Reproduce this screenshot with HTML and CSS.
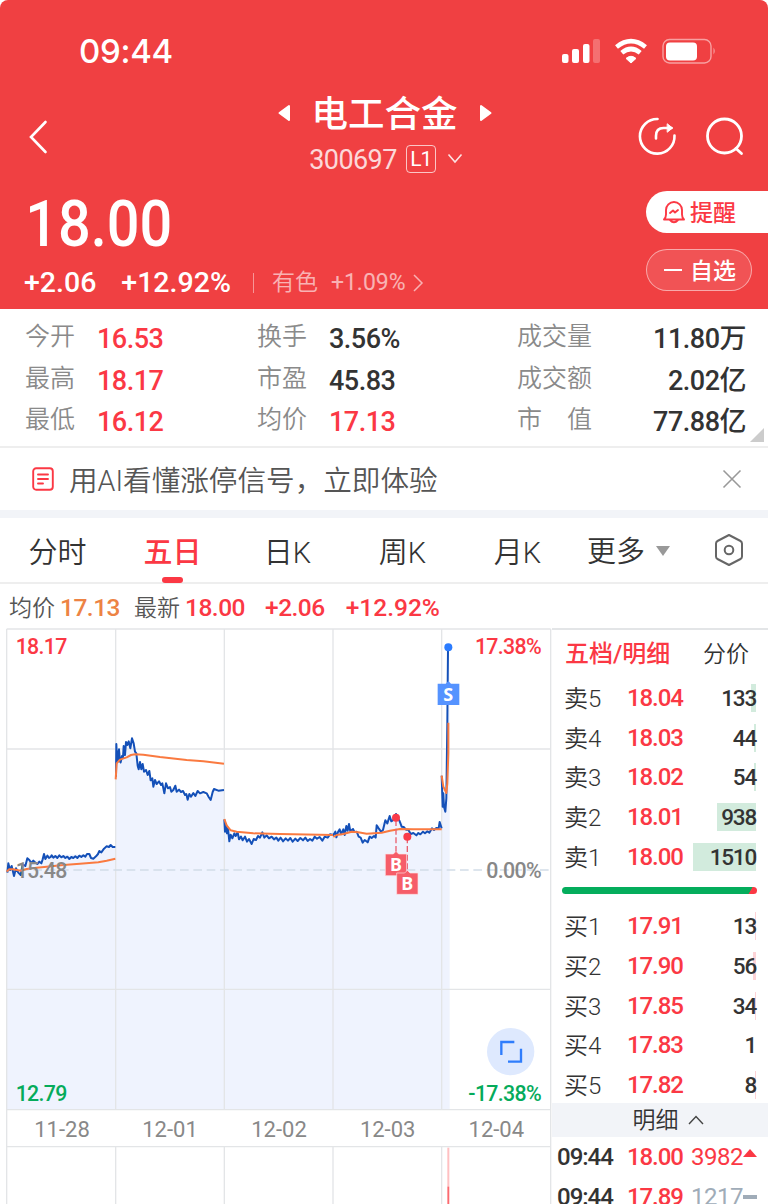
FILE: index.html
```html
<!DOCTYPE html>
<html lang="zh-CN">
<head>
  <meta charset="UTF-8">
  <meta name="viewport" content="width=device-width, initial-scale=1.0">
  <title>电工合金 300697</title>
  <link rel="stylesheet" href="styles.css">
</head>
<body>

  <header class="header">
    <!-- Status bar -->
    <div class="status-bar">
      <span class="clock">09:44</span>
      <svg class="status-icons" width="156" height="28" viewBox="0 0 156 28" fill="#fff">
        <rect x="2" y="17" width="6.5" height="9" rx="2"/>
        <rect x="12" y="12" width="7" height="14" rx="2"/>
        <rect x="23" y="7" width="6.5" height="19" rx="2"/>
        <rect x="33" y="2" width="7" height="24" rx="2" opacity=".25"/>
        <path d="M71 26l-5-4.600q5-4.200 10 0z" stroke="#fff" stroke-width="1" stroke-linejoin="round"/>
        <g fill="none" stroke="#fff" stroke-width="4.600">
          <path d="M56.500 10q14.500-11.600 29 0"/>
          <path d="M61.800 15.800q9.200-7.600 18.400 0"/>
        </g>
        <rect x="103" y="2.500" width="48" height="23.500" rx="6.500" fill="none" stroke="#fff" stroke-width="1.400" opacity=".5"/>
        <rect x="106" y="5.500" width="31" height="18" rx="4"/>
        <path d="M153.500 10.500q2.500 3.500 0 7z" opacity=".5"/>
      </svg>
    </div>

    <!-- Stock name -->
    <div class="nav">
      <svg class="back" width="24" height="36" viewBox="0 0 24 36"><path d="M18.500 3L4 18l14.500 15" fill="none" stroke="#fff" stroke-width="2.600" stroke-linecap="round"/></svg>
      <div class="stock">
        <div class="stock-name">
          <svg width="13" height="18" viewBox="0 0 13 18"><path d="M1.500 9L11 2v14z" fill="#fff" stroke="#fff" stroke-width="2" stroke-linejoin="round"/></svg>
          <h1>电工合金</h1>
          <svg width="13" height="18" viewBox="0 0 13 18"><path d="M11.500 9L2 2v14z" fill="#fff" stroke="#fff" stroke-width="2" stroke-linejoin="round"/></svg>
        </div>
        <div class="stock-code">
          <span class="code">300697</span>
          <span class="level">L1</span>
          <svg width="16" height="11" viewBox="0 0 16 11"><path d="M1.500 1.500L8 9l6.500-7.500" fill="none" stroke="#fff" stroke-width="1.600" opacity=".85"/></svg>
        </div>
      </div>
      <div class="nav-icons">
        <svg width="40" height="40" viewBox="0 0 40 40" fill="none" stroke="#fff" stroke-width="2.600" stroke-linecap="round" stroke-linejoin="round">
          <path d="M19.500 3A17.300 17.300 0 1 0 36.500 19.500"/>
          <path d="M18 22.500V20q0-8 7.500-8h8"/>
          <path d="M29.500 8l5 4-5 4z" fill="#fff" stroke-width="1"/>
        </svg>
        <svg width="40" height="40" viewBox="0 0 40 40" fill="none" stroke="#fff" stroke-width="2.800" stroke-linecap="round">
          <circle cx="19.500" cy="20" r="17"/>
          <path d="M31 32.500l5.500 5"/>
        </svg>
      </div>
    </div>

    <!-- Price -->
    <div class="quote">
      <div>
        <div class="price">18.00</div>
        <div class="change">
          <span class="delta">+2.06</span>
          <span class="percent">+12.92%</span>
          <i class="sep"></i>
          <span class="sector">有色</span>
          <span class="sector-num">+1.09%</span>
          <svg width="12" height="20" viewBox="0 0 12 20"><path d="M2 2l8 8-8 8" fill="none" stroke="#fff" stroke-width="1.500" opacity=".6"/></svg>
        </div>
      </div>
      <div class="actions">
        <div class="pill pill-alert">
          <svg width="24" height="24" viewBox="0 0 24 24" fill="none" stroke="#fb3844" stroke-width="1.900" stroke-linecap="round" stroke-linejoin="round">
            <path d="M2 19.500q2-2 2-5V10a8 8 0 0 1 16 0v4.500q0 3 2 5zM8 20q4 4.500 8 0"/>
            <path d="M8 13l3-2.500 2 2L16 10"/>
          </svg>
          <span>提醒</span>
        </div>
        <div class="pill pill-watch"><i class="minus"></i><span>自选</span></div>
      </div>
    </div>
  </header>

  <!-- Key figures -->
  <section class="stats">
    <dl>
      <dt>今开</dt><dd class="up">16.53</dd>
      <dt>最高</dt><dd class="up">18.17</dd>
      <dt>最低</dt><dd class="up">16.12</dd>
    </dl>
    <dl>
      <dt>换手</dt><dd>3.56%</dd>
      <dt>市盈</dt><dd>45.83</dd>
      <dt>均价</dt><dd class="up">17.13</dd>
    </dl>
    <dl class="wide">
      <dt>成交量</dt><dd>11.80万</dd>
      <dt>成交额</dt><dd>2.02亿</dd>
      <dt>市　值</dt><dd>77.88亿</dd>
    </dl>
    <i class="corner"></i>
  </section>

  <!-- AI notice -->
  <section class="notice">
    <svg width="22" height="24" viewBox="0 0 22 24" fill="none" stroke="#fb3844" stroke-width="1.900" stroke-linecap="round">
      <rect x="1.200" y="1.200" width="19.600" height="21.600" rx="3"/>
      <path d="M6 7.500h10M6 12h10M6 16.500h5"/>
    </svg>
    <p>用AI看懂涨停信号，立即体验</p>
    <svg width="20" height="20" viewBox="0 0 20 20" stroke="#999" stroke-width="1.600"><path d="M1.500 1.500l17 17M18.500 1.500l-17 17"/></svg>
  </section>

  <!-- Period tabs -->
  <nav class="tabs">
    <a>分时</a>
    <a class="active">五日</a>
    <a>日K</a>
    <a>周K</a>
    <a>月K</a>
    <a class="more">更多<i class="caret"></i></a>
    <svg width="32" height="34" viewBox="0 0 32 34" fill="none" stroke="#666" stroke-width="2" stroke-linejoin="round">
      <path d="M16 2l11.500 6q1.500.8 1.500 2.500v13q0 1.700-1.500 2.500L16 32 4.500 26Q3 25.200 3 23.500v-13Q3 8.800 4.500 8z"/>
      <circle cx="16" cy="17" r="4.300"/>
    </svg>
  </nav>

  <div class="summary">
    <span class="label">均价</span><span class="avg">17.13</span>
    <span class="label latest">最新</span><span>18.00</span>
    <span class="s-delta">+2.06</span><span class="s-percent">+12.92%</span>
  </div>

  <main class="main">
    <!-- Five day chart -->
    <svg class="chart" width="552" height="576" viewBox="0 24 1656 1728">
      <g class="area">
        <path d="M20 755L25 735 30 750 42 758 62 760 82 718 127 722 132 705 268 703 278 716 320 680 346 682V1469H20z"/>
        <path d="M347 470L349 375 362 425 378 370 396 357 413 435 453 480 493 515 526 500 563 538 593 514 632 540 642 508 673 510V1469H347z"/>
        <path d="M673 598L688 660 707 637 755 665 787 642 850 655 900 662 960 657 999 645 1045 615 1090 668 1130 620 1165 595 1200 600 1225 635 1250 645 1325 620V1469H673z"/>
        <path d="M1325 467L1330 560 1336 575 1344 310 1349 90V1469H1325z"/>
      </g>
      <g class="grid">
        <path d="M20 27H1652M20 387H1652M20 1108H1652M20 1469H1652M20 1580H1652"/>
        <path d="M20 27V1752M347 27V1469M673 27V1469M999 27V1469M1325 27V1469M1652 27V1752M347 1580V1752M673 1580V1752M999 1580V1752M1325 1580V1752"/>
      </g>
      <path class="zero" d="M20 750H1652"/>

      <g class="line">
        <polyline points="22,758 25,730 30,750 35,738 42,768 48,745 55,758 62,765 68,733 76,738 82,715 88,720 94,729 100,722 106,728 112,732 118,725 124,730 128,718 132,702 136,717 142,707 147,714 152,711 155,706 160,713 166,708 172,714 178,706 184,712 190,708 196,714 202,710 208,717 214,711 220,714 226,709 232,714 238,707 244,711 250,706 256,710 261,702 268,702 273,714 280,716 288,709 294,702 298,693 304,697 312,686 320,679 327,681 332,675 338,681 346,681"/>
        <polyline points="348,470 349,372 351,416 353,425 355,398 357,388 360,424 362,427 366,408 369,412 371,378 375,405 378,366 382,375 386,364 391,385 396,355 401,370 405,395 409,400 413,437 416,448 420,426 424,448 428,432 432,455 438,450 443,465 448,453 452,481 457,475 460,500 465,480 470,492 477,484 483,495 487,490 493,520 498,490 504,505 510,501 514,515 520,510 526,497 530,515 537,509 543,516 549,513 555,525 559,522 563,539 568,522 573,530 580,519 586,528 593,513 600,520 610,516 620,520 626,531 632,540 638,516 642,507 655,512 672,510"/>
        <polyline points="673,598 675,635 678,612 681,640 684,625 688,664 692,644 697,655 703,640 707,648 713,637 717,658 723,650 728,661 735,650 741,665 747,657 755,672 761,657 768,660 774,648 780,653 787,637 793,653 800,646 807,655 815,650 822,658 829,653 835,662 842,653 849,664 857,655 864,662 871,654 878,665 886,656 893,663 901,654 909,661 916,653 923,663 930,657 937,662 944,650 951,656 959,651 967,662 974,650 983,653 990,643 1000,645 1006,635 1009,652 1014,636 1019,628 1023,643 1030,628 1034,645 1039,618 1043,632 1047,612 1051,634 1059,627 1063,636 1070,635 1076,650 1082,653 1088,668 1094,660 1103,667 1109,650 1115,654 1122,648 1127,653 1130,616 1136,625 1143,635 1149,630 1156,601 1162,610 1169,588 1174,604 1180,600 1188,582 1193,593 1199,604 1205,620 1211,621 1218,629 1225,629 1232,642 1240,639 1249,646 1255,639 1261,643 1269,635 1275,640 1282,634 1288,638 1296,625 1302,630 1309,624 1316,625 1319,606 1325,625"/>
        <polyline points="1325,467 1328,560 1330,520 1332,560 1336,575 1339,535 1342,310 1344,88"/>
      </g>
      <g class="avg-line">
        <path d="M20 755L27 748 40 748 62 752 80 747 110 743 140 740 190 735 240 731 295 727 320 722 346 716"/>
        <path d="M347 478L350 430 360 419 380 412 393 405 405 403 430 404 480 411 560 420 610 424 672 431"/>
        <path d="M673 597L680 616 692 631 710 635 760 640 840 642 999 645"/>
        <path d="M1000 651L1010 645 1030 642 1055 635 1075 637 1100 641 1145 638 1170 632 1200 627 1240 628 1325 628"/>
        <path d="M1325 467L1330 500 1339 519 1342 490 1345 400 1345 308"/>
      </g>

      <!-- Trades -->
      <g class="buy">
        <path class="stem" d="M1188 600V700M1222 652V765"/>
        <circle cx="1188" cy="593" r="12"/>
        <circle cx="1222" cy="650" r="12"/>
        <path class="tag" d="M1156 702H1180L1188 694 1196 702H1220V767H1156z"/>
        <path class="tag" d="M1190 759H1214L1222 751 1230 759H1254V823H1190z"/>
        <text x="1188" y="753">B</text>
        <text x="1222" y="810">B</text>
      </g>
      <g class="sell">
        <circle cx="1345" cy="82" r="12"/>
        <path class="tag" d="M1313 191H1337L1345 183 1353 191H1378V255H1313z"/>
        <text x="1345" y="242">S</text>
      </g>

      <g class="axis">
        <text class="red" x="47" y="103">18.17</text>
        <text class="red end" x="1623" y="103">17.38%</text>
        <text x="47" y="773">15.48</text>
        <text class="end" x="1623" y="773">0.00%</text>
        <text class="green" x="47" y="1444">12.79</text>
        <text class="green end" x="1623" y="1444">-17.38%</text>
      </g>
      <g class="dates">
        <text x="186" y="1551">11-28</text>
        <text x="510" y="1551">12-01</text>
        <text x="837" y="1551">12-02</text>
        <text x="1163" y="1551">12-03</text>
        <text x="1489" y="1551">12-04</text>
      </g>

      <!-- Full screen button -->
      <circle cx="1532" cy="1295" r="71" fill="#dee9fe"/>
      <path d="M1504 1305V1266H1543M1563 1286V1325H1524" fill="none" stroke="#2f7dfc" stroke-width="7"/>

      <path d="M1345 1583V1752" stroke="#ffc0c2" stroke-width="6"/>
      <path d="M1345 1700V1752" stroke="#fb6a70" stroke-width="5"/>
    </svg>

    <!-- Order book -->
    <aside class="book">
      <div class="book-tabs"><b>五档/明细</b><span>分价</span></div>
      <ul class="asks">
        <li><span>卖5</span><b>18.04</b><em style="--w: 5px">133</em></li>
        <li><span>卖4</span><b>18.03</b><em style="--w: 2px">44</em></li>
        <li><span>卖3</span><b>18.02</b><em style="--w: 2px">54</em></li>
        <li><span>卖2</span><b>18.01</b><em style="--w: 39px">938</em></li>
        <li><span>卖1</span><b>18.00</b><em style="--w: 63px">1510</em></li>
      </ul>
      <div class="ratio"></div>
      <ul class="bids">
        <li><span>买1</span><b>17.91</b><em style="--w: 1px">13</em></li>
        <li><span>买2</span><b>17.90</b><em style="--w: 3px">56</em></li>
        <li><span>买3</span><b>17.85</b><em style="--w: 1px">34</em></li>
        <li><span>买4</span><b>17.83</b><em style="--w: 0px">1</em></li>
        <li><span>买5</span><b>17.82</b><em style="--w: 1px">8</em></li>
      </ul>
      <div class="ticks-title">
        <span>明细</span>
        <svg width="16" height="10" viewBox="0 0 16 10"><path d="M1 9l7-7.500L15 9" fill="none" stroke="#444" stroke-width="1.400"/></svg>
      </div>
      <ul class="ticks">
        <li><span>09:44</span><b>18.00</b><em class="up">3982</em><i class="arrow"></i></li>
        <li><span>09:44</span><b>17.89</b><em>1217</em><i class="flat"></i></li>
      </ul>
    </aside>
  </main>

</body>
</html>
```
FILE: styles.css
```css
* {
  margin: 0;
  padding: 0;
  box-sizing: border-box;
}

body {
  width: 768px;
  height: 1204px;
  overflow: hidden;
  background: #fff;
  color: #333;
  font-family: Roboto, "Noto Sans CJK SC", sans-serif;
}

i, em {
  font-style: normal;
}

ul {
  list-style: none;
}

svg {
  display: block;
  flex: none;
}

.up {
  color: #fb3844;
}

/* Header */
.header {
  height: 309px;
  background: #f04042;
  color: #fff;
  border-radius: 8px 8px 0 0;
}

.status-bar {
  height: 92px;
  padding: 10px 52px 0 79px;
  display: flex;
  align-items: center;
  justify-content: space-between;
}

.clock {
  font: 500 33px/40px Inter, sans-serif;
  letter-spacing: -0.300px;
}

.nav {
  height: 88px;
  padding: 0 23px 0 27px;
  display: flex;
  justify-content: space-between;
}

.back {
  margin-top: 27px;
}

.stock {
  margin-left: 80px;
}

.stock-name {
  height: 42px;
  display: flex;
  align-items: center;
  justify-content: center;
  gap: 21px;
}

.stock-name h1 {
  font-size: 36.500px;
  line-height: 42px;
  font-weight: 500;
  padding-top: 3px;
}

.stock-code {
  height: 48px;
  display: flex;
  align-items: center;
  justify-content: center;
  padding: 1px 0 0 3px;
}

.code {
  font-size: 27px;
  letter-spacing: -0.600px;
  opacity: .8;
  padding-top: 2px;
}

.level {
  width: 30px;
  height: 28px;
  margin: 0 11px 0 9px;
  border: 1px solid rgba(255, 255, 255, .7);
  border-radius: 4px;
  font-size: 21px;
  line-height: 27px;
  text-align: center;
  letter-spacing: -1px;
}

.nav-icons {
  display: flex;
  gap: 27px;
  padding-top: 24px;
}

.quote {
  display: flex;
  justify-content: space-between;
}

.price {
  height: 86px;
  padding: 2px 0 0 28px;
  font-size: 64px;
  line-height: 86px;
  font-weight: 500;
  transform: scaleX(.9);
  transform-origin: 0 0;
}

.change {
  height: 30px;
  padding: 3px 0 0 24px;
  display: flex;
  align-items: center;
  font-size: 28.500px;
  line-height: 30px;
  font-weight: 500;
}

.percent {
  margin-left: 25px;
}

.sep {
  width: 1px;
  height: 20px;
  margin: 0 18px 0 22px;
  background: rgba(255, 255, 255, .45);
}

.sector, .sector-num {
  font-size: 23px;
  font-weight: 400;
  opacity: .6;
}

.sector {
  font-weight: 350;
}

.sector-num {
  margin: 0 6px 0 13px;
}

.actions {
  width: 122px;
  padding-top: 11px;
}

.pill {
  height: 42px;
  display: flex;
  align-items: center;
  font-size: 23px;
  font-weight: 500;
}

.pill span {
  margin-top: -3px;
}

.pill-alert {
  padding-left: 16px;
  gap: 4px;
  background: #fff;
  color: #fb3844;
  border-radius: 21px 0 0 21px;
}

.pill-watch {
  width: 106px;
  margin-top: 16px;
  padding-left: 17px;
  gap: 8px;
  border: 1px solid rgba(255, 255, 255, .5);
  border-radius: 21px;
  background: rgba(255, 255, 255, .1);
}

.minus {
  width: 18px;
  height: 2px;
  background: #fff;
}

/* Key figures */
.stats {
  position: relative;
  height: 139px;
  padding: 7px 22px 0 25px;
  display: flex;
  border-bottom: 2px solid #eee;
}

.stats dl {
  width: 232px;
  display: grid;
  grid-template-columns: 72px 1fr;
  grid-auto-rows: 41.500px;
  line-height: 41px;
}

.stats dl + dl {
  width: 260px;
}

.stats .wide {
  width: 229px;
  grid-template-columns: 90px 1fr;
  text-align: right;
}

.stats dt {
  color: #8a8a8a;
  font-size: 25px;
  font-weight: 350;
  text-align: left;
}

.stats dd {
  font-size: 27px;
  font-weight: 500;
  letter-spacing: -0.500px;
  padding-top: 3px;
}

.corner {
  position: absolute;
  right: 4px;
  bottom: 4px;
  border: 7.500px solid #ccc;
  border-top-color: transparent;
  border-left-color: transparent;
}

/* Notice */
.notice {
  height: 70px;
  padding: 0 26px 0 32px;
  display: flex;
  align-items: center;
  border-bottom: 8px solid #f2f4f8;
}

.notice p {
  flex: 1;
  margin-left: 15px;
  padding-top: 4px;
  font-size: 28.600px;
  line-height: 40px;
  font-weight: 350;
  color: #555;
}

/* Tabs */
.tabs {
  height: 66px;
  padding: 0 23px 0 0;
  display: flex;
  align-items: center;
  border-bottom: 2px solid #eee;
}

.tabs a {
  position: relative;
  width: 115px;
  height: 64px;
  padding-top: 3px;
  font-size: 29px;
  font-weight: 350;
  line-height: 64px;
  text-align: center;
}

.tabs .active {
  color: #fb3844;
  font-weight: 500;
}

.tabs .active::after {
  content: "";
  position: absolute;
  left: 47px;
  bottom: -1px;
  width: 21px;
  height: 6px;
  border-radius: 3px;
  background: #fb3844;
}

.tabs .more {
  width: auto;
  margin: 0 auto 0 12px;
  display: flex;
  align-items: center;
}

.caret {
  margin: -1px 0 0 11px;
  border: 7px solid transparent;
  border-top: 10px solid #999;
  border-bottom: 0;
}

.summary {
  height: 44px;
  padding: 3px 0 0 9px;
  display: flex;
  align-items: center;
  color: #fb3844;
  font-size: 24.500px;
  font-weight: 500;
  letter-spacing: -0.500px;
}

.summary .label {
  width: 51px;
  margin-top: -4px;
  color: #555;
  font-size: 23px;
  font-weight: 350;
  letter-spacing: 0;
}

.summary .avg {
  color: #ed8344;
}

.summary .latest {
  margin-left: 14px;
}

.s-delta {
  margin-left: 20px;
}

.s-percent {
  margin-left: 21px;
  letter-spacing: 0;
}

/* Chart */
.main {
  display: flex;
}

.grid path {
  fill: none;
  stroke: #e3e5e7;
  stroke-width: 4;
}

.area {
  fill: #eff3fe;
}

.zero {
  stroke: #d2dde8;
  stroke-width: 4;
  stroke-dasharray: 26 14;
}

.line {
  fill: none;
  stroke: #1450b8;
  stroke-width: 6;
  stroke-linejoin: round;
}

.avg-line {
  fill: none;
  stroke: #fa7a40;
  stroke-width: 6;
  stroke-linejoin: round;
}

.buy {
  fill: #f93a49;
}

.sell {
  fill: #2b7cff;
}

.stem {
  stroke: #e9606f;
  stroke-width: 4;
  stroke-dasharray: 18 8;
}

.buy .tag {
  fill: #f65d69;
  stroke: #fde3e6;
  stroke-width: 2;
}

.sell .tag {
  fill: #5593ff;
}

.buy text, .sell text {
  fill: #fff;
  font: 700 54px "Noto Sans", sans-serif;
  text-anchor: middle;
}

.axis {
  fill: #888;
  font-size: 64px;
  font-weight: 500;
  letter-spacing: -2px;
}

.axis .end {
  text-anchor: end;
}

.axis .red {
  fill: #fb3844;
}

.axis .green {
  fill: #05ab5b;
}

.dates {
  fill: #888;
  font-size: 66px;
  text-anchor: middle;
}

/* Order book */
.book {
  width: 216px;
  height: 576px;
  border-top: 2px solid #e3e5e7;
}

.book-tabs {
  height: 48px;
  padding: 0 19px 5px 13px;
  display: flex;
  align-items: center;
  justify-content: space-between;
  font-size: 23px;
}

.book-tabs b {
  color: #fb3844;
  font-size: 24px;
  font-weight: 500;
}

.book-tabs span {
  font-weight: 350;
}

.book li {
  height: 39.700px;
  padding: 0 12px 0 12px;
  display: flex;
  align-items: center;
  font-size: 24px;
}

.book li span {
  width: 63px;
  margin-top: -3px;
  font-weight: 350;
}

.book li b {
  width: 60px;
  font-weight: 500;
  letter-spacing: -1.100px;
  color: #fb3844;
}

.book li em {
  flex: 1;
  height: 28px;
  line-height: 29px;
  font-size: 22.500px;
  font-weight: 500;
  letter-spacing: -1.200px;
  text-align: right;
}

.asks em {
  background: linear-gradient(#d2ebdd, #d2ebdd) right / var(--w) 100% no-repeat;
}

.bids em {
  background: linear-gradient(#fdd3d6, #fdd3d6) right / var(--w) 100% no-repeat;
}

.ratio {
  height: 7px;
  margin: 11px 11px 12px 10px;
  border-radius: 4px;
  background: linear-gradient(120deg, #04ad5c 95.500%, #fb3844 96%);
}

.ticks-title {
  height: 34px;
  margin-top: -2px;
  display: flex;
  align-items: center;
  justify-content: center;
  gap: 9px;
  padding-left: 16px;
  background: #f2f4f8;
  font-size: 23px;
}

.ticks-title span {
  margin-top: -3px;
  font-weight: 350;
}

.book .ticks li {
  padding: 1px 11px 0 5px;
}

.book .ticks li span {
  width: 70px;
  margin: 0;
  font-weight: 500;
  letter-spacing: -1px;
}

.book .ticks em {
  font-size: 24px;
  font-weight: 400;
  letter-spacing: -0.500px;
  color: #a0acb8;
}

.book .ticks .up {
  color: #fb3844;
}

.arrow {
  border: 7px solid transparent;
  border-bottom: 8px solid #fb3844;
  border-top: 0;
  margin-bottom: 8px;
}

.flat {
  width: 14px;
  height: 4px;
  background: #a0acb8;
}
```
